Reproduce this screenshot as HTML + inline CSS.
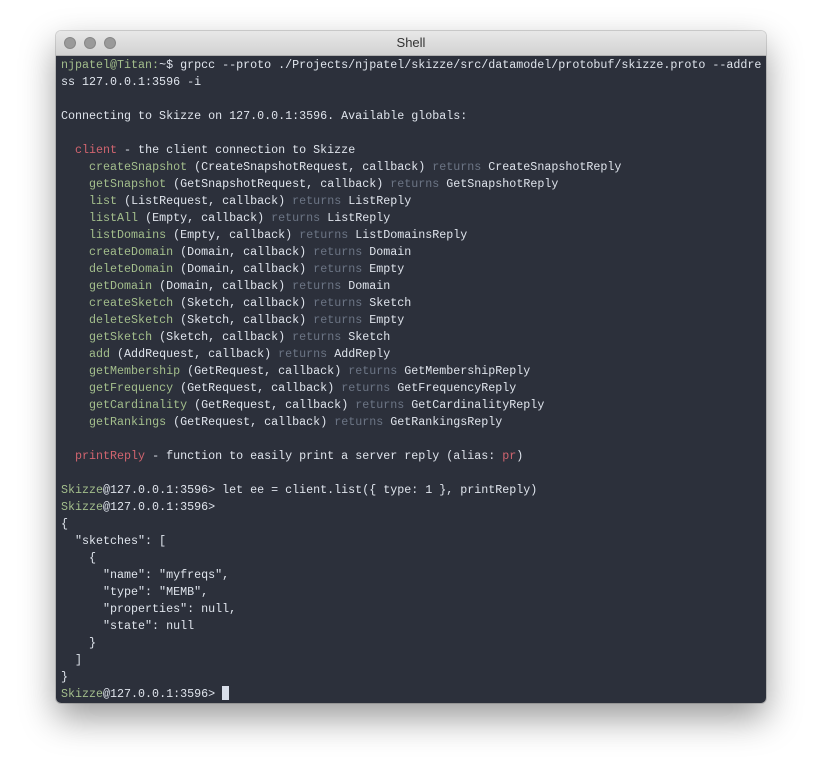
<!DOCTYPE html>
<html><head><meta charset="utf-8"><style>
html,body{margin:0;padding:0;background:#fff;width:822px;height:784px;overflow:hidden}
.win{position:absolute;left:56px;top:31px;width:710px;height:672px;border-radius:5px;overflow:hidden;box-shadow:0 15px 35px rgba(0,0,0,.4),0 0 0 1px rgba(0,0,0,.15)}
.tb{height:24px;background:linear-gradient(#e8e8e8,#d2d2d2);border-bottom:1px solid #b0b0b0;position:relative;font:13px "Liberation Sans",sans-serif;color:#333;text-align:center;line-height:24px}
.dot{position:absolute;top:6px;width:12px;height:12px;border-radius:50%;background:#9a9a9a;border:0.5px solid #888;box-sizing:border-box}
.term{background:#2c303b;height:647px;padding:0 0 0 5px;box-sizing:border-box}
pre{margin:0;padding-top:1px;font:11.68px/17px "Liberation Mono",monospace;color:#dfe4ec;white-space:pre}
.g{color:#a3be8c}.r{color:#d0646f}.m{color:#6c7585}
.cur{display:inline-block;width:7px;height:14px;background:#d8dee9;vertical-align:-3px}
</style></head><body>
<div class="win">
<div class="tb"><span class="dot" style="left:8px"></span><span class="dot" style="left:28px"></span><span class="dot" style="left:48px"></span>Shell</div>
<div class="term"><pre><span class="g">njpatel@Titan:</span>~$ grpcc --proto ./Projects/njpatel/skizze/src/datamodel/protobuf/skizze.proto --addre
ss 127.0.0.1:3596 -i

Connecting to Skizze on 127.0.0.1:3596. Available globals:

  <span class="r">client</span> - the client connection to Skizze
    <span class="g">createSnapshot</span> (CreateSnapshotRequest, callback) <span class="m">returns</span> CreateSnapshotReply
    <span class="g">getSnapshot</span> (GetSnapshotRequest, callback) <span class="m">returns</span> GetSnapshotReply
    <span class="g">list</span> (ListRequest, callback) <span class="m">returns</span> ListReply
    <span class="g">listAll</span> (Empty, callback) <span class="m">returns</span> ListReply
    <span class="g">listDomains</span> (Empty, callback) <span class="m">returns</span> ListDomainsReply
    <span class="g">createDomain</span> (Domain, callback) <span class="m">returns</span> Domain
    <span class="g">deleteDomain</span> (Domain, callback) <span class="m">returns</span> Empty
    <span class="g">getDomain</span> (Domain, callback) <span class="m">returns</span> Domain
    <span class="g">createSketch</span> (Sketch, callback) <span class="m">returns</span> Sketch
    <span class="g">deleteSketch</span> (Sketch, callback) <span class="m">returns</span> Empty
    <span class="g">getSketch</span> (Sketch, callback) <span class="m">returns</span> Sketch
    <span class="g">add</span> (AddRequest, callback) <span class="m">returns</span> AddReply
    <span class="g">getMembership</span> (GetRequest, callback) <span class="m">returns</span> GetMembershipReply
    <span class="g">getFrequency</span> (GetRequest, callback) <span class="m">returns</span> GetFrequencyReply
    <span class="g">getCardinality</span> (GetRequest, callback) <span class="m">returns</span> GetCardinalityReply
    <span class="g">getRankings</span> (GetRequest, callback) <span class="m">returns</span> GetRankingsReply

  <span class="r">printReply</span> - function to easily print a server reply (alias: <span class="r">pr</span>)

<span class="g">Skizze</span>@127.0.0.1:3596&gt; let ee = client.list({ type: 1 }, printReply)
<span class="g">Skizze</span>@127.0.0.1:3596&gt;
{
  "sketches": [
    {
      "name": "myfreqs",
      "type": "MEMB",
      "properties": null,
      "state": null
    }
  ]
}
<span class="g">Skizze</span>@127.0.0.1:3596&gt; <span class="cur"></span></pre></div>
</div>
</body></html>
